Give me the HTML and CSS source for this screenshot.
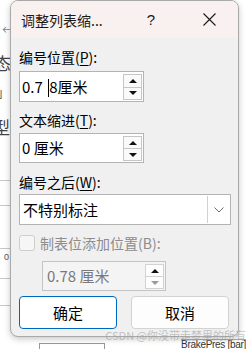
FILE: index.html
```html
<!doctype html>
<html lang="zh-CN">
  <head>
    <meta charset="UTF-8">
    <title>调整列表缩进量</title>
    <link rel="stylesheet" href="styles.css">
  </head>
  <body>
    <div class="backdrop">
      <span class="doc-glyph arrow">←</span>
      <span class="doc-glyph tai">态</span>
      <span class="doc-glyph bracket">」</span>
      <span class="doc-glyph xing">型</span>
      <div class="doc-rule r1"></div>
      <div class="doc-rule r2"></div>
      <div class="doc-rule r3"></div>
      <span class="doc-zero">0</span>
      <div class="doc-rule r4"></div>
      <div class="doc-rule r5"></div>
    </div>

    <section class="dialog">
      <header class="titlebar">
        <span class="title">调整列表缩...</span>
        <span class="help">?</span>
        <span class="close">
          <svg width="13" height="13" viewBox="0 0 13 13">
            <path d="M0.5 0.5 L12.5 12.5 M12.5 0.5 L0.5 12.5" stroke="#1a1a1a" stroke-width="1.1" fill="none"/>
          </svg>
        </span>
      </header>

      <div class="content">
        <div class="field-label first">编号位置(<u>P</u>):</div>
        <div class="spin-box">
          <span class="value">0.7&nbsp;<i class="caret"></i>8厘米</span>
          <span class="spinner">
            <span class="spin up"></span>
            <span class="spin down"></span>
          </span>
        </div>

        <div class="field-label">文本缩进(<u>T</u>):</div>
        <div class="spin-box second">
          <span class="value">0 厘米</span>
          <span class="spinner">
            <span class="spin up"></span>
            <span class="spin down"></span>
          </span>
        </div>

        <div class="field-label third">编号之后(<u>W</u>):</div>
        <div class="select-box">
          <span class="value">不特别标注</span>
          <span class="drop">
            <svg width="10" height="6" viewBox="0 0 10 6">
              <path d="M0.5 0.5 L5 5 L9.5 0.5" stroke="#6a6a6a" stroke-width="1" fill="none"/>
            </svg>
          </span>
        </div>

        <div class="check-row">
          <span class="checkbox"></span>
          <span class="check-label">制表位添加位置(B):</span>
        </div>

        <div class="spin-box disabled">
          <span class="value">0.78 厘米</span>
          <span class="spinner">
            <span class="spin up"></span>
            <span class="spin down off"></span>
          </span>
        </div>

        <div class="actions">
          <button class="btn primary">确定</button>
          <button class="btn">取消</button>
        </div>
      </div>
    </section>

    <div class="statusbar">
      <span class="status-box"></span>
      <span class="status-text">BrakePres [bar]</span>
    </div>

    <div class="watermark">CSDN @你没带走梦里的所有</div>
  </body>
</html>
```

FILE: styles.css
```css
body {
  background-color: #fff;
  color: #000;
  font-family: "Noto Sans CJK SC", "Microsoft YaHei", sans-serif;
  height: 349px;
  margin: 0;
  overflow: hidden;
  position: relative;
  width: 246px
}
.backdrop {
  display: flex;
  flex-direction: column;
  height: 100%;
  left: 0;
  overflow: hidden;
  position: absolute;
  top: 0;
  width: 10px;
  z-index: 0
}
.doc-glyph {
  color: #444;
  display: block;
  line-height: 1
}
.arrow {
  color: #888;
  font-size: 12px;
  margin: 24px 0 0 2px
}
.tai {
  font-size: 17px;
  margin: 18px 0 0 -6px
}
.bracket {
  color: #666;
  font-size: 13px;
  margin: 14px 0 0 -3px
}
.xing {
  font-size: 17px;
  margin: 20px 0 0 -7px
}
.doc-rule {
  border-top: 1px solid #c8c8c8;
  flex: none;
  height: 0
}
.r1 { margin-top: 45px }
.r2 { margin-top: 24px }
.r3 { margin-top: 42px }
.doc-zero {
  color: #555;
  font: 9px "Liberation Sans", sans-serif;
  margin: 3px 0 0 4px
}
.r4 { margin-top: 16px }
.r5 { margin-top: 26px }

.dialog {
  background-color: #f0f0f0;
  border: 1px solid #a9a9a9;
  border-radius: 8px;
  box-shadow: 0 2px 6px rgba(0, 0, 0, .22);
  box-sizing: border-box;
  height: 337px;
  margin-left: 10px;
  overflow: hidden;
  position: relative;
  width: 229px;
  z-index: 1
}
.titlebar {
  align-items: center;
  background-color: #f9f1f0;
  display: flex;
  font-size: 14px;
  height: 37px;
  line-height: 20px;
  padding-left: 10px
}
.title {
  flex: 1;
  color: #1a1a1a
}
.help, .close {
  display: flex;
  justify-content: center;
  width: 58px
}
.help {
  color: #1a1a1a;
  font: 15px "Liberation Sans", sans-serif
}
.content {
  padding: 0 7px 0 8px
}
.field-label {
  font-size: 14px;
  line-height: 20px;
  margin-top: 8px
}
.field-label.first { margin-top: 9px }
.field-label.third { margin-top: 9px }
u {
  text-decoration-thickness: 1px;
  text-underline-offset: 2px
}
.spin-box {
  align-items: center;
  background-color: #fff;
  border: 1px solid #b4b4b4;
  box-sizing: border-box;
  display: flex;
  height: 31px;
  margin-top: 4px;
  width: 125px
}
.spin-box.second {
  height: 30px;
  margin-top: 3px
}
.value {
  flex: 1;
  font-size: 15px;
  line-height: 20px;
  padding-left: 2px;
  white-space: nowrap
}
.caret {
  border-left: 1px solid #000;
  display: inline-block;
  height: 18px;
  margin: 0 0 0 2px;
  vertical-align: -4px
}
.spinner {
  align-self: stretch;
  display: flex;
  flex-direction: column;
  margin: 2px 1px 1px 0;
  width: 19px
}
.spin {
  align-items: center;
  background-color: #fafafa;
  border: 1px solid #c6c6c6;
  box-sizing: border-box;
  display: flex;
  flex: 1;
  justify-content: center
}
.spin + .spin {
  border-top: 0
}
.spin::before {
  border-left: 4px solid transparent;
  border-right: 4px solid transparent;
  content: "";
  height: 0;
  width: 0
}
.up::before {
  border-bottom: 4px solid #111
}
.down::before {
  border-top: 4px solid #111
}
.down.off::before {
  border-top-color: #9a9a9a
}
.select-box {
  align-items: stretch;
  background-color: #fff;
  border: 1px solid #b4b4b4;
  box-sizing: border-box;
  display: flex;
  height: 31px;
  margin-top: 2px;
  width: 212px
}
.select-box .value {
  align-self: center;
  padding-left: 3px
}
.drop {
  align-items: center;
  border-left: 1px solid #d0d0d0;
  display: flex;
  justify-content: center;
  margin: 1px;
  width: 21px
}
.check-row {
  align-items: center;
  display: flex;
  height: 20px;
  margin-top: 8px
}
.checkbox {
  background-color: #f6f6f6;
  border: 1px solid #cdcdcd;
  border-radius: 3px;
  box-sizing: border-box;
  height: 16px;
  width: 16px
}
.check-label {
  color: #8c8c8c;
  font-size: 14px;
  line-height: 20px;
  margin-left: 5px
}
.spin-box.disabled {
  background-color: #f4f4f4;
  border-color: #c4c4c4;
  height: 30px;
  margin: 8px 0 0 23px;
  width: 124px
}
.disabled .value {
  color: #7a7a7a;
  padding-left: 4px
}
.disabled .spin {
  background-color: #fdfdfd;
  border-color: #d2d2d2
}
.actions {
  display: flex;
  gap: 14px;
  margin-top: 5px
}
.btn {
  background-color: #fdfdfd;
  border: 1px solid #d3d3d3;
  border-radius: 4px;
  color: #000;
  font: 15px "Noto Sans CJK SC", sans-serif;
  height: 33px;
  padding: 0;
  width: 98px
}
.btn.primary {
  background-color: #fff;
  border-color: #0067c0
}

.statusbar {
  align-items: flex-end;
  display: flex;
  height: 12px;
  justify-content: flex-end;
  position: relative
}
.status-box {
  border: 1px solid #999;
  border-bottom: 0;
  height: 5px;
  margin-right: 76px;
  width: 64px
}
.status-text {
  border-top: 1px solid #aaa;
  color: #333;
  font: 10px/8px "Liberation Sans", sans-serif;
  letter-spacing: -.3px;
  overflow: hidden;
  padding-top: 1px;
  white-space: nowrap
}
.watermark {
  color: rgba(150, 150, 150, .55);
  font-size: 11px;
  line-height: 14px;
  position: absolute;
  right: 0;
  top: 328px;
  white-space: nowrap;
  z-index: 2
}
```
